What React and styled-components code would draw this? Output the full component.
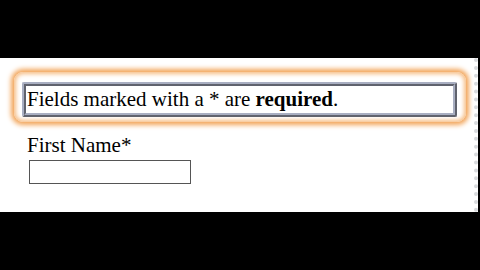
import React from "react";
import styled, { createGlobalStyle } from "styled-components";

const Global = createGlobalStyle`
  html, body {
    margin: 0;
    padding: 0;
    background: #000;
  }
  body {
    font-family: "Liberation Serif", "Times New Roman", serif;
  }
`;

const Screen = styled.div`
  width: 480px;
  height: 270px;
  display: flex;
  flex-direction: column;
  background: #000;
`;

const Band = styled.div`
  height: ${({ h }) => h}px;
  flex-shrink: 0;
  background: #000;
`;

const Sheet = styled.div`
  height: 154px;
  margin-right: 2px;
  background: #fff;
  padding: 14px 0 0 14px;
  box-sizing: border-box;
  display: flex;
  flex-direction: column;
  border-right: 4px dotted #d8dadd;
`;

const Glow = styled.div`
  width: 452px;
  height: 50px;
  box-sizing: border-box;
  padding: 10px 9px 5px 8px;
  border-radius: 9px;
  background: #fff;
  box-shadow: 0 0 5px 3px #f2a458, inset 0 0 4px 2px #f6bd84;
`;

const Notice = styled.div`
  height: 35px;
  box-sizing: border-box;
  border: 4px ridge #a9afc2;
  border-radius: 2px;
  display: flex;
  align-items: center;
  padding-left: 1px;
  font-size: 21px;
  color: #000;
  background: #fff;
`;

const Label = styled.label`
  margin: 12px 0 0 13px;
  font-size: 21px;
  line-height: 22px;
  color: #000;
`;

const TextInput = styled.input`
  margin: 4px 0 0 15px;
  width: 162px;
  height: 24px;
  box-sizing: border-box;
  border: 1px solid #555;
  outline: none;
  padding: 0 3px;
  font-family: inherit;
`;

export default function App() {
  return (
    <>
      <Global />
      <Screen>
        <Band h={58} />
        <Sheet>
          <Glow>
            <Notice>
              <span>
                Fields marked with a * are <b>required</b>.
              </span>
            </Notice>
          </Glow>
          <Label htmlFor="first">First Name*</Label>
          <TextInput id="first" type="text" />
        </Sheet>
      </Screen>
    </>
  );
}
